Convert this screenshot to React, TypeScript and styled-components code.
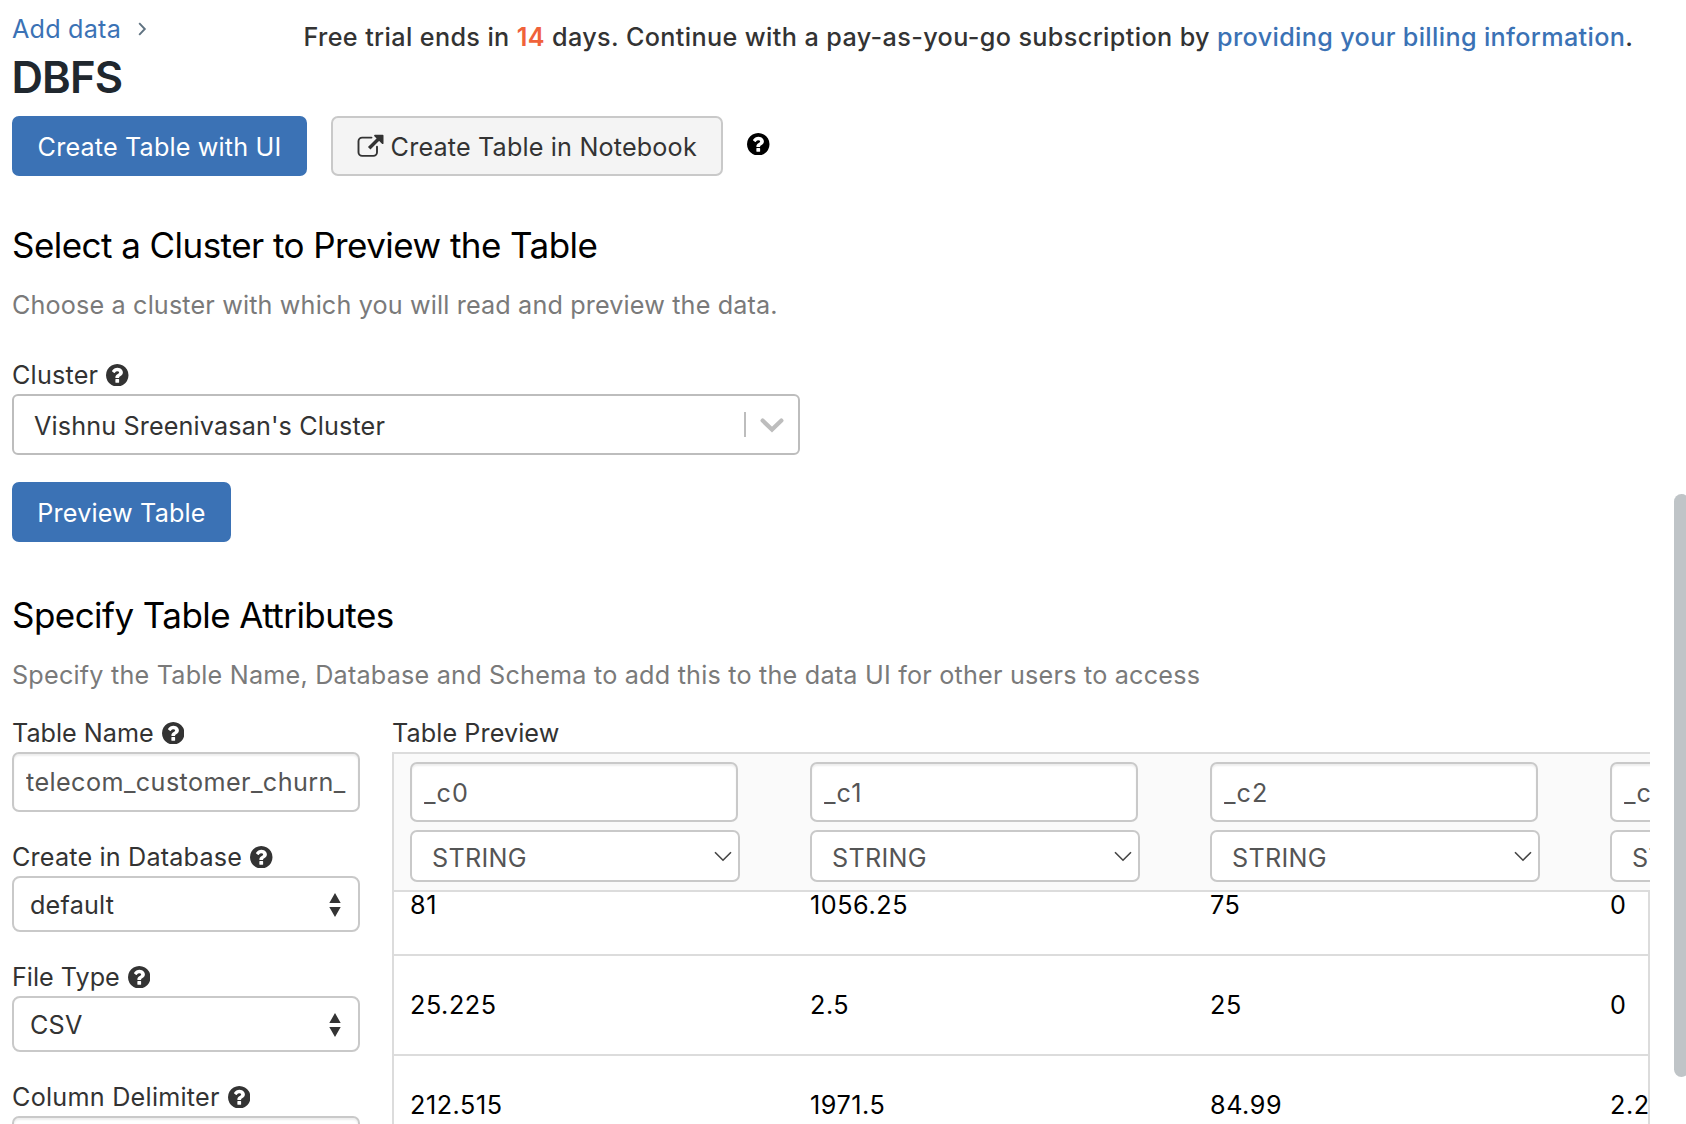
import React from 'react';
import styled, { createGlobalStyle } from 'styled-components';

const GlobalStyle = createGlobalStyle`
  *, *::before, *::after { box-sizing: border-box; }
  body {
    margin: 0;
    background: #fff;
    overflow: hidden;
    color: #333;
    font-family: Inter, "Noto Sans", sans-serif;
    font-size: 25.2px;
    font-weight: 400;
    line-height: 30px;
    letter-spacing: 0.2px;
    white-space: nowrap;
  }
  h1, h2, p { margin: 0; font-weight: 400; }
  button, input { font: inherit; letter-spacing: inherit; color: inherit; }
`;

const Page = styled.main`
  position: relative;
  height: 1124px;
  overflow: hidden;
  padding: 14px 36px 0 12px;
`;

const Header = styled.header`
  display: flex;
  height: 102px;
`;

const TitleBlock = styled.div`
  width: 291.5px;
`;

const Breadcrumb = styled.nav`
  display: flex;
  align-items: center;
  gap: 17px;
`;

const Link = styled.a`
  color: #3b72b5;
  text-decoration: none;
`;

const Title = styled.h1`
  && { font-weight: 600; }
  margin: 10px 0 0 -0.5px;
  font-size: 43.6px;
  line-height: 48px;
  letter-spacing: -0.9px;
  color: #20272e;
`;

const TrialBanner = styled.p`
  && { font-weight: 500; }
  padding-top: 8px;
  letter-spacing: 0.375px;

  ${Link} { letter-spacing: 0.34px; }
`;

const DaysLeft = styled.span`
  font-weight: 600;
  color: #f0623a;
`;

const Actions = styled.div`
  display: flex;
  align-items: center;
`;

const Button = styled.button<{ $primary?: boolean; $width: number }>`
  display: flex;
  align-items: center;
  justify-content: center;
  gap: 6.5px;
  width: ${p => p.$width}px;
  height: 60px;
  padding: 1px 0 0;
  border-radius: 7px;
  border: 2px solid ${p => (p.$primary ? '#3b72b5' : '#c9c9c9')};
  background: ${p => (p.$primary ? '#3b72b5' : '#f4f4f4')};
  color: ${p => (p.$primary ? '#fff' : '#333')};
  letter-spacing: 0.16px;
`;

const NotebookAction = styled.div`
  display: flex;
  gap: 24px;
  margin-left: 24px;
  color: #000;

  > svg { margin-top: 16.5px; }
`;

const Heading = styled.h2<{ $gap: number }>`
  margin-top: ${p => p.$gap}px;
  font-size: 35px;
  line-height: 40px;
  letter-spacing: -0.55px;
  color: #000;
`;

const Description = styled.p<{ $tracking: number }>`
  margin-top: 25px;
  letter-spacing: ${p => p.$tracking}px;
  color: #7a7a7a;
`;

const Field = styled.div<{ $gap: number }>`
  margin-top: ${p => p.$gap}px;
`;

const Label = styled.div<{ $tracking?: number }>`
  display: flex;
  align-items: center;
  gap: 8px;
  height: 34px;
  padding-bottom: 4px;
  letter-spacing: ${p => p.$tracking ?? 0.2}px;
`;

const ClusterSelect = styled.div`
  display: flex;
  align-items: center;
  width: 788px;
  height: 61px;
  padding: 0 13px 0 20px;
  border: 2px solid #bdbdbd;
  border-radius: 6px;
`;

const ClusterName = styled.span`
  flex: 1;
  padding-top: 2px;
  letter-spacing: 0.13px;
`;

const Divider = styled.span`
  width: 2px;
  height: 25px;
  margin-right: 14px;
  background: #bdbdbd;
`;

const PreviewAction = styled.div`
  margin-top: 27px;
`;

const Attributes = styled.div`
  display: grid;
  grid-template-columns: 348px 1258px;
  column-gap: 32px;
`;

const TextInput = styled.input`
  display: block;
  width: 100%;
  height: 60px;
  padding: 0 8px 0 12px;
  border: 2px solid #c9c9c9;
  border-radius: 7px;
  outline: none;
  background: #fff;
  box-shadow: inset 0 2px 2px rgba(0, 0, 0, 0.07);
  letter-spacing: 0.41px;
  color: #555;
`;

const Select = styled.div`
  display: flex;
  align-items: center;
  justify-content: space-between;
  height: 56px;
  padding: 2px 17.5px 0 16px;
  border: 2px solid #c9c9c9;
  border-radius: 8px;

  svg { margin-top: -1px; }
`;

const TypeSelect = styled.div`
  display: flex;
  align-items: center;
  justify-content: space-between;
  width: 330px;
  height: 52px;
  margin-top: 8px;
  padding: 3px 6px 0 20px;
  border: 2px solid #c9c9c9;
  border-radius: 7px;
  background: #fff;
  letter-spacing: 0.3px;
  color: #555;

  svg { margin-top: -3px; }
`;

const PreviewColumn = styled.section`
  margin-top: 28px;
  overflow: hidden;
`;

const PreviewHead = styled.div`
  display: flex;
  height: 140px;
  padding: 8px 0 0 16px;
  border: solid #dcdcdc;
  border-width: 2px 0 2px 2px;
  background: #fafafa;
`;

const HeadCell = styled.div`
  flex: 0 0 400px;

  ${TextInput} {
    width: 328px;
    padding-top: 2px;
    letter-spacing: 1.1px;
  }
`;

const PreviewBody = styled.div`
  height: 260px;
  overflow: hidden;
  border: solid #dcdcdc;
  border-width: 0 2px;
`;

const ScrolledRows = styled.div`
  margin-top: -36px;
`;

const Row = styled.div`
  display: flex;
  align-items: center;
  height: 100px;
  padding-left: 16px;
  border-bottom: 2px solid #dcdcdc;
  letter-spacing: 0.55px;
  color: #000;
`;

const Cell = styled.span`
  flex: 0 0 400px;
`;

const ScrollThumb = styled.div`
  position: absolute;
  top: 494px;
  right: -3px;
  width: 15px;
  height: 583px;
  border-radius: 8px;
  background: #bfc4c7;
`;

const HelpIcon = () => (
  <svg width="22.5" height="22.5" viewBox="128 128 1536 1536" fill="currentColor">
    <path d="M1024 1376v-192q0-14-9-23t-23-9h-192q-14 0-23 9t-9 23v192q0 14 9 23t23 9h192q14 0 23-9t9-23zm256-672q0-88-55.5-163t-138.5-116-170-41q-243 0-371 213-15 24 8 42l132 100q7 6 19 6 16 0 25-12 53-68 86-92 34-24 86-24 48 0 85.5 26t37.5 59q0 38-20 61t-68 45q-63 28-115.5 86.5t-52.5 125.5v36q0 14 9 23t23 9h192q14 0 23-9t9-23q0-19 21.5-49.5t54.5-49.5q32-18 49-28.5t46-35 44.5-48 28-60.5 12.5-81zm384 192q0 209-103 385.5t-279.5 279.5-385.5 103-385.5-103-279.5-279.5-103-385.5 103-385.5 279.5-279.5 385.5-103 385.5 103 279.5 279.5 103 385.5z" />
  </svg>
);

const ExternalIcon = () => (
  <svg width="27" height="26" viewBox="0 0 27 26" fill="none" stroke="currentColor">
    <path d="M14.5 3.6H5.2A3.7 3.7 0 0 0 1.5 7.3v10.9a3.7 3.7 0 0 0 3.7 3.7h11.1a3.7 3.7 0 0 0 3.7-3.7v-5.4" strokeWidth="1.9" strokeLinecap="round" />
    <path d="M12.2 14.2 22.5 4" strokeWidth="3.5" />
    <path d="M18 1.6h7.6v7.6z" fill="currentColor" strokeWidth="1.8" strokeLinejoin="round" />
  </svg>
);

const CrumbChevron = () => (
  <svg width="9" height="14" viewBox="0 0 9 14" fill="none" stroke="#5f7281" strokeWidth="1.9">
    <path d="M1.2 1.2 6.8 7l-5.6 5.8" />
  </svg>
);

const ClusterChevron = () => (
  <svg width="25" height="16" viewBox="0 0 25 16" fill="none" stroke="#bdbdbd" strokeWidth="4.2" strokeLinecap="round">
    <path d="M2.6 3.6l9.4 9L21.4 3.6" />
  </svg>
);

const SortArrows = () => (
  <svg width="12" height="24" viewBox="0 0 12 24" fill="#333">
    <path d="M6 0l5.7 10H.3zM6 24L.3 14h11.4z" />
  </svg>
);

const ThinChevron = () => (
  <svg width="18" height="11" viewBox="0 0 18 11" fill="none" stroke="#444" strokeWidth="1.6">
    <path d="M1 1.2l8 8 8-8" />
  </svg>
);

const columns = ['_c0', '_c1', '_c2', '_c3'];

const rows = [
  ['81', '1056.25', '75', '0'],
  ['25.225', '2.5', '25', '0'],
  ['212.515', '1971.5', '84.99', '2.23'],
];

export default function App() {
  return (
    <>
      <GlobalStyle />
      <Page>
        <Header>
          <TitleBlock>
            <Breadcrumb>
              <Link>Add data</Link>
              <CrumbChevron />
            </Breadcrumb>
            <Title>DBFS</Title>
          </TitleBlock>
          <TrialBanner>
            Free trial ends in <DaysLeft>14</DaysLeft> days. Continue with a pay-as-you-go subscription by{' '}
            <Link>providing your billing information</Link>.
          </TrialBanner>
        </Header>

        <Actions>
          <Button $primary $width={295}>Create Table with UI</Button>
          <NotebookAction>
            <Button $width={392}>
              <ExternalIcon />
              Create Table in Notebook
            </Button>
            <HelpIcon />
          </NotebookAction>
        </Actions>

        <Heading $gap={49}>Select a Cluster to Preview the Table</Heading>
        <Description $tracking={0.145}>Choose a cluster with which you will read and preview the data.</Description>
        <Field $gap={40}>
          <Label>Cluster <HelpIcon /></Label>
          <ClusterSelect>
            <ClusterName>Vishnu Sreenivasan's Cluster</ClusterName>
            <Divider />
            <ClusterChevron />
          </ClusterSelect>
        </Field>
        <PreviewAction>
          <Button $primary $width={219}>Preview Table</Button>
        </PreviewAction>

        <Heading $gap={53}>Specify Table Attributes</Heading>
        <Description $tracking={0.205}>
          Specify the Table Name, Database and Schema to add this to the data UI for other users to access
        </Description>

        <Attributes>
          <section>
            <Field $gap={28}>
              <Label $tracking={0}>Table Name <HelpIcon /></Label>
              <TextInput defaultValue="telecom_customer_churn_" />
            </Field>
            <Field $gap={30}>
              <Label $tracking={0.17}>Create in Database <HelpIcon /></Label>
              <Select>default <SortArrows /></Select>
            </Field>
            <Field $gap={30}>
              <Label $tracking={0}>File Type <HelpIcon /></Label>
              <Select>CSV <SortArrows /></Select>
            </Field>
            <Field $gap={30}>
              <Label $tracking={0.24}>Column Delimiter <HelpIcon /></Label>
              <TextInput />
            </Field>
          </section>

          <PreviewColumn>
            <Label $tracking={0.08}>Table Preview</Label>
            <PreviewHead>
              {columns.map(name => (
                <HeadCell key={name}>
                  <TextInput defaultValue={name} />
                  <TypeSelect>STRING <ThinChevron /></TypeSelect>
                </HeadCell>
              ))}
            </PreviewHead>
            <PreviewBody>
              <ScrolledRows>
                {rows.map(cells => (
                  <Row key={cells[0]}>
                    {cells.map((value, i) => <Cell key={i}>{value}</Cell>)}
                  </Row>
                ))}
              </ScrolledRows>
            </PreviewBody>
          </PreviewColumn>
        </Attributes>
        <ScrollThumb />
      </Page>
    </>
  );
}
